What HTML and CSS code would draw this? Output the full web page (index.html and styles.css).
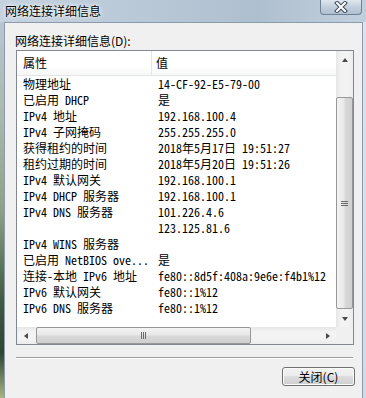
FILE: index.html
```html
<!DOCTYPE html>
<html lang="zh-CN">
  <head>
    <meta charset="UTF-8" />
    <meta name="viewport" content="width=device-width, initial-scale=1.0" />
    <title>网络连接详细信息</title>
    <link rel="stylesheet" href="styles.css">
  </head>
  <body>
    <div class="window">
      <div class="titlebar">
        <span class="title">网络连接详细信息</span>
        <div class="close">
          <svg width="14" height="12" viewBox="0 0 14 12">
            <path d="M3 2 L11 10 M11 2 L3 10" stroke="#3d4a58" stroke-width="4" stroke-linecap="square" />
            <path d="M3 2 L11 10 M11 2 L3 10" stroke="#ffffff" stroke-width="2" stroke-linecap="square" />
          </svg>
        </div>
      </div>
      <div class="frame">
        <div class="frame-left"></div>
        <div class="client">
          <div class="caption">网络连接详细信息(D):</div>
          <div class="listview">
            <div class="list">
              <div class="header">
                <div class="col-name">属性</div>
                <div class="col-value">值</div>
              </div>
              <div class="row"><div>物理地址</div><div>14-CF-92-E5-79-00</div></div>
              <div class="row"><div>已启用 DHCP</div><div>是</div></div>
              <div class="row"><div>IPv4 地址</div><div>192.168.100.4</div></div>
              <div class="row"><div>IPv4 子网掩码</div><div>255.255.255.0</div></div>
              <div class="row"><div>获得租约的时间</div><div>2018年5月17日 19:51:27</div></div>
              <div class="row"><div>租约过期的时间</div><div>2018年5月20日 19:51:26</div></div>
              <div class="row"><div>IPv4 默认网关</div><div>192.168.100.1</div></div>
              <div class="row"><div>IPv4 DHCP 服务器</div><div>192.168.100.1</div></div>
              <div class="row"><div>IPv4 DNS 服务器</div><div>101.226.4.6</div></div>
              <div class="row"><div></div><div>123.125.81.6</div></div>
              <div class="row"><div>IPv4 WINS 服务器</div><div></div></div>
              <div class="row"><div>已启用 NetBIOS ove...</div><div>是</div></div>
              <div class="row"><div>连接-本地 IPv6 地址</div><div>fe80::8d5f:408a:9e6e:f4b1%12</div></div>
              <div class="row"><div>IPv6 默认网关</div><div>fe80::1%12</div></div>
              <div class="row"><div>IPv6 DNS 服务器</div><div>fe80::1%12</div></div>
            </div>
            <div class="vscroll">
              <div class="sb-btn"><span class="arrow up"></span></div>
              <div class="thumb vthumb"><span class="grip"></span></div>
              <div class="sb-btn"><span class="arrow down"></span></div>
            </div>
            <div class="hscroll">
              <div class="sb-btn"><span class="arrow left"></span></div>
              <div class="thumb hthumb"><span class="grip"></span></div>
              <div class="sb-btn"><span class="arrow right"></span></div>
            </div>
            <div class="corner"></div>
          </div>
          <div class="separator"></div>
          <div class="actions">
            <button class="btn">关闭(C)</button>
          </div>
        </div>
        <div class="frame-right"></div>
      </div>
    </div>
  </body>
</html>
```

FILE: styles.css
```css
body {
  margin: 0;
  width: 366px;
  height: 398px;
  overflow: hidden;
  font-family: "Noto Sans CJK SC", sans-serif;
  font-size: 12px;
  color: #000;
}
.window {
  height: 398px;
  display: flex;
  flex-direction: column;
  background: #d6e0ea;
}
.titlebar {
  height: 22px;
  display: flex;
  justify-content: space-between;
  align-items: flex-start;
  background: linear-gradient(to right, #c4d2df 0%, #b9c8d7 40%, #aebfcf 70%, #c2d0de 100%);
}
.title {
  padding: 3px 0 0 5px;
  line-height: 16px;
  text-shadow: 0 0 6px #fff, 0 0 3px #fff;
}
.close {
  width: 40px;
  height: 14px;
  margin-right: 4px;
  border: 1px solid #6f8296;
  border-top: none;
  border-radius: 0 0 4px 4px;
  background: linear-gradient(#dfe7ef, #c2cfdc 50%, #b0c0d0);
  display: flex;
  justify-content: center;
  align-items: center;
}
.frame {
  flex: 1;
  display: flex;
}
.frame-left {
  width: 4px;
  background: linear-gradient(#b9c6d2 0%, #a9b8ae 25%, #8ea184 50%, #3b5840 75%, #2c4633 88%, #a9b57e 100%);
}
.frame-right {
  width: 3px;
  background: linear-gradient(#dbe4ee, #cfdbe6);
}
.client {
  flex: 1;
  background: #f0f0f0;
  border: 1px solid #8c9bab;
  border-bottom: none;
  display: flex;
  flex-direction: column;
}
.caption {
  padding: 10px 0 0 10px;
  line-height: 16px;
}
.listview {
  margin: 1px 0 0 11px;
  width: 336px;
  height: 293px;
  border: 1px solid #828790;
  background: #fff;
  display: grid;
  grid-template-columns: 1fr 17px;
  grid-template-rows: 1fr 17px;
}
.list {
  overflow: hidden;
  font-family: "Noto Sans Mono CJK SC", "Noto Sans CJK SC", monospace;
  white-space: nowrap;
}
.header {
  height: 24px;
  display: grid;
  grid-template-columns: 135px 1fr;
  border-bottom: 1px solid #e5e5e5;
  font-family: "Noto Sans CJK SC", sans-serif;
  line-height: 24px;
  background: linear-gradient(#ffffff, #ffffff 60%, #f6f7f8);
}
.col-name {
  padding-left: 6px;
  border-right: 1px solid #e3e5e8;
}
.col-value {
  padding-left: 4px;
}
.row {
  height: 16px;
  line-height: 16px;
  display: grid;
  grid-template-columns: 136px 1fr;
}
.row > div:first-child {
  padding-left: 6px;
}
.row > div:last-child {
  padding-left: 5px;
}
.vscroll {
  display: flex;
  flex-direction: column;
  background: linear-gradient(to right, #e6e6e6, #f3f3f3 30%, #f3f3f3 70%, #ececec);
}
.hscroll {
  display: flex;
  background: linear-gradient(#e6e6e6, #f3f3f3 30%, #f3f3f3 70%, #ececec);
}
.corner {
  background: #f0f0f0;
}
.sb-btn {
  width: 17px;
  height: 17px;
  flex: none;
  display: flex;
  justify-content: center;
  align-items: center;
}
.arrow {
  width: 0;
  height: 0;
  border: 3px solid transparent;
}
.arrow.up {
  border-bottom: 4px solid #4a4a4a;
  border-top: none;
}
.arrow.down {
  border-top: 4px solid #4a4a4a;
  border-bottom: none;
}
.arrow.left {
  border-right: 4px solid #4a4a4a;
  border-left: none;
}
.arrow.right {
  border-left: 4px solid #4a4a4a;
  border-right: none;
}
.thumb {
  border: 1px solid #979797;
  border-radius: 2px;
  display: flex;
  justify-content: center;
  align-items: center;
  box-sizing: border-box;
}
.vthumb {
  flex: 1;
  margin: 29px 0 1px;
  background: linear-gradient(to right, #f3f3f3, #e8e8e8 45%, #d9d9d9 55%, #cfcfcf);
}
.hthumb {
  width: 215px;
  margin: 0 auto 0 2px;
  background: linear-gradient(#f3f3f3, #e8e8e8 45%, #d9d9d9 55%, #cfcfcf);
}
.vthumb .grip {
  width: 7px;
  height: 5px;
  background: repeating-linear-gradient(#6a6a6a 0 1px, transparent 1px 2px);
}
.hthumb .grip {
  width: 5px;
  height: 7px;
  background: repeating-linear-gradient(to right, #6a6a6a 0 1px, transparent 1px 2px);
}
.separator {
  margin: 12px 9px 0 11px;
  border-top: 1px solid #a0a0a0;
  border-bottom: 1px solid #fff;
}
.actions {
  display: flex;
  justify-content: flex-end;
  padding: 8px 7px 0 0;
}
.btn {
  width: 73px;
  height: 19px;
  padding: 0;
  font-family: "Noto Sans CJK SC", sans-serif;
  font-size: 12px;
  line-height: 17px;
  color: #000;
  border: 1px solid #707070;
  border-radius: 3px;
  background: linear-gradient(#f2f2f2, #ebebeb 50%, #dddddd 50%, #cfcfcf);
  box-shadow: inset 0 0 0 1px #fcfcfc;
}
```
